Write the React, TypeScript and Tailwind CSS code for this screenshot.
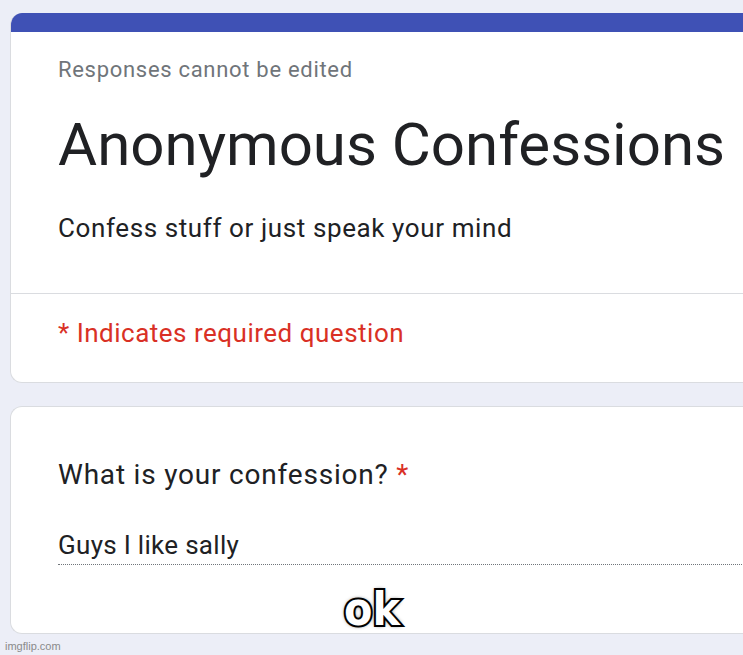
import React from "react";

export default function App() {
  return (
    <div className="relative w-[743px] h-[655px] overflow-hidden bg-[#eceef7]" style={{ fontFamily: "Roboto, 'Liberation Sans', sans-serif" }}>
      <div className="pl-[10px] pt-[13px]">
        <div className="w-[800px] rounded-tl-[12px] rounded-bl-[12px] overflow-hidden border-l border-b border-[#dadce0] bg-white">
          <div className="h-[19px] bg-[#3f51b5]" />
          <div className="pl-[47px] pt-[25px] pb-[49px]">
            <div className="text-[22px] leading-[26px] tracking-[0.7px] text-[#70757a]">Responses cannot be edited</div>
            <div className="mt-[28px] text-[60px] leading-[68px] text-[#202124] whitespace-nowrap">Anonymous Confessions</div>
            <div className="mt-[33px] text-[26px] leading-[32px] tracking-[0.6px] text-[#202124]">Confess stuff or just speak your mind</div>
          </div>
          <div className="border-t border-[#dadce0] pl-[47px] pt-[23px] pb-[33px]">
            <div className="text-[26px] leading-[32px] tracking-[0.5px] text-[#d93025]">* Indicates required question</div>
          </div>
        </div>
        <div className="mt-[23px] w-[800px] h-[228px] rounded-l-[12px] border-l border-t border-b border-[#dadce0] bg-white pl-[47px] pt-[51px]">
          <div className="text-[28px] leading-[34px] tracking-[0.8px] text-[#202124]">
            What is your confession? <span className="text-[#d93025]">*</span>
          </div>
          <div className="mt-[38px] w-[760px] border-b border-dotted border-[#70757a] pb-[4px] text-[26px] leading-[30px] tracking-[0.3px] text-[#202124]">
            Guys I like sally
          </div>
        </div>
      </div>
      <div
        className="absolute left-[344px] top-[584px] text-[46px] leading-[50px] font-bold text-white"
        style={{ fontFamily: "'DejaVu Sans Condensed', 'DejaVu Sans', sans-serif", fontStretch: "condensed", WebkitTextStroke: "4px black", paintOrder: "stroke fill", textShadow: "0 0 4px #000, 0 0 2px #000" }}
      >
        ok
      </div>
      <div className="absolute left-[5px] top-[639px] text-[11px] leading-[14px] text-[#8a8a8a]" style={{ fontFamily: "'Liberation Sans', Arial, sans-serif" }}>
        imgflip.com
      </div>
    </div>
  );
}
